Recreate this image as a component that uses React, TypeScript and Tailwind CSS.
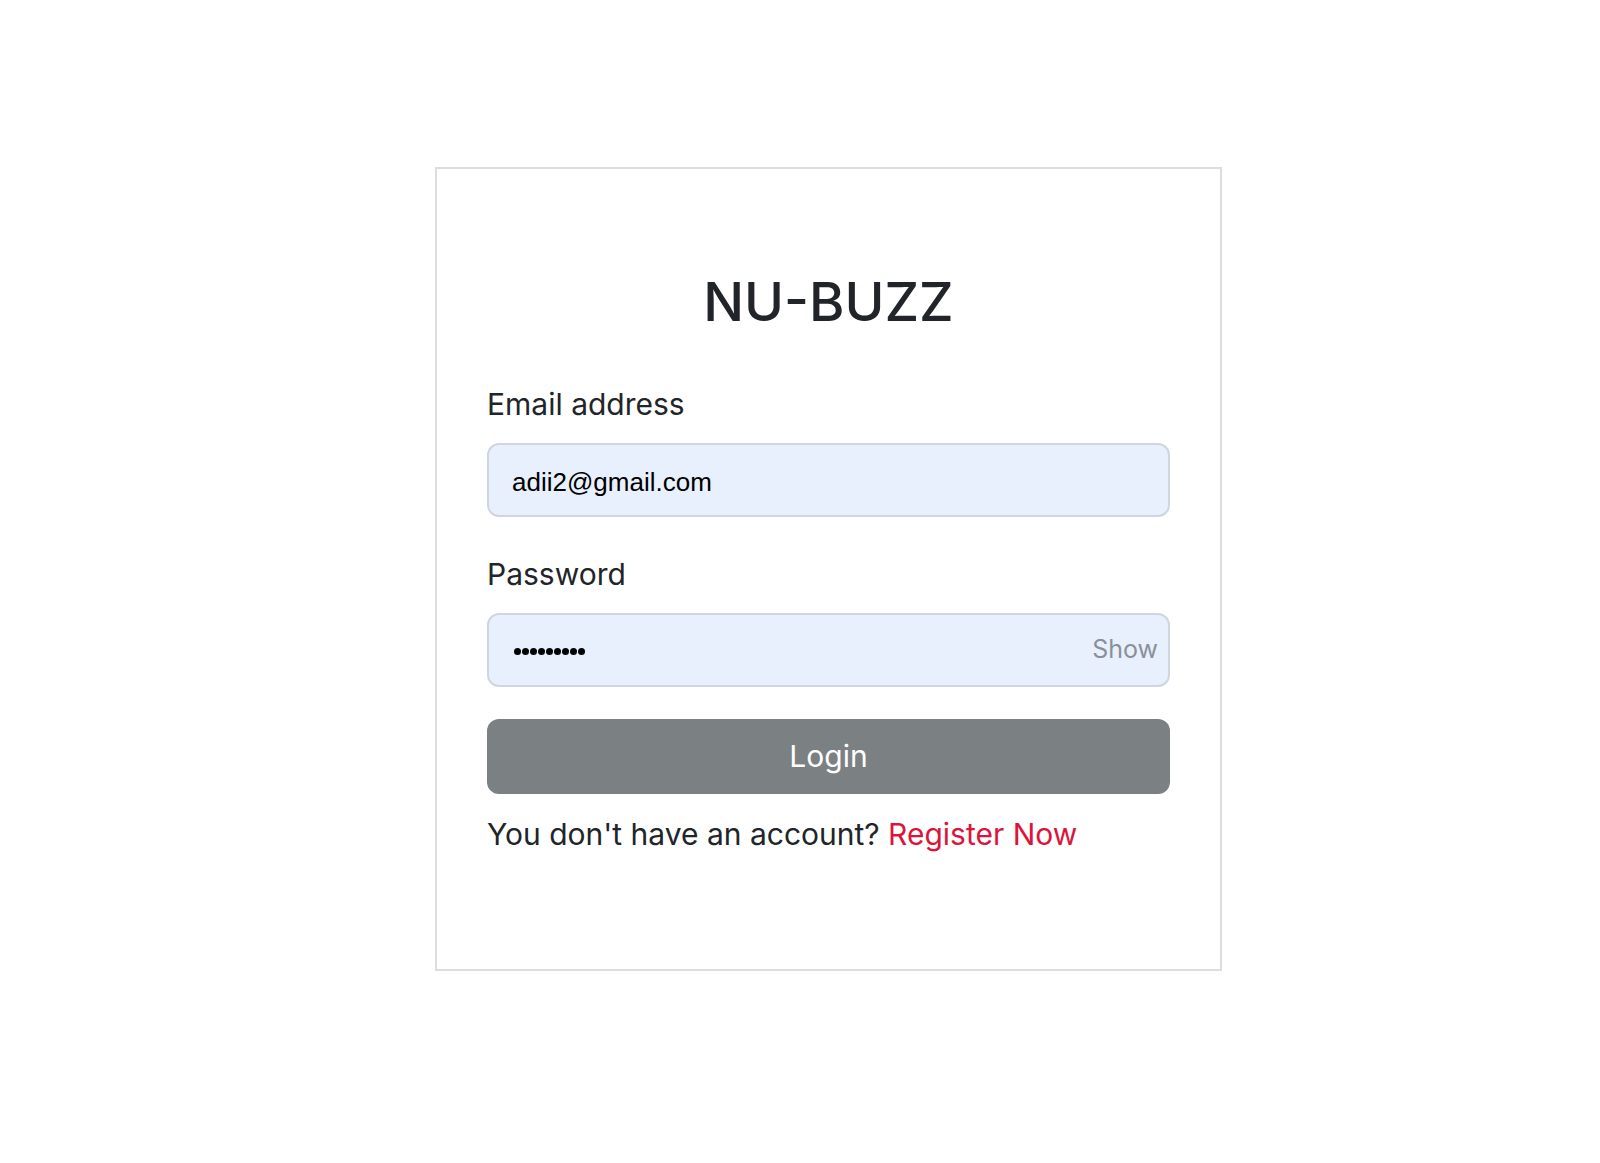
export default function App() {
  return (
    <div className="min-h-screen bg-white font-['Inter',sans-serif] text-[#212529]">
      <div className="ml-[435px] pt-[167px]">
        <div className="w-[787px] h-[804px] border-2 border-[#dddddd] px-[50px] pt-[100px]">
          <h1 className="text-center text-[54px] leading-[65px] font-medium">NU-BUZZ</h1>

          <label className="block mt-[48px] text-[30px] leading-[45px]">Email address</label>
          <div className="mt-[16px] h-[74px] rounded-[12px] border-2 border-[#cfd6e0] bg-[#e8f0fe] flex items-center px-[23px] pt-[5px]">
            <span className="font-['Liberation_Sans',sans-serif] text-[26px] text-black">adii2@gmail.com</span>
          </div>

          <label className="block mt-[35px] text-[30px] leading-[45px]">Password</label>
          <div className="mt-[16px] h-[74px] rounded-[12px] border-2 border-[#cfd6e0] bg-[#e8f0fe] flex items-center justify-between pl-[25px] pr-[10px]">
            <div className="flex gap-[1px] pt-[3px]" aria-label="password">
              {Array.from({ length: 9 }).map((_, i) => (
                <span key={i} className="w-[7px] h-[7px] rounded-full bg-black" />
              ))}
            </div>
            <span className="text-[25px] text-[#8b9098]">Show</span>
          </div>

          <button className="mt-[32px] w-full h-[75px] rounded-[12px] bg-[#7b8083] text-white text-[30px]">
            Login
          </button>

          <p className="mt-[18px] text-[30px] leading-[45px]">
            You don't have an account? <a className="text-[#dc143c]">Register Now</a>
          </p>
        </div>
      </div>
    </div>
  );
}
